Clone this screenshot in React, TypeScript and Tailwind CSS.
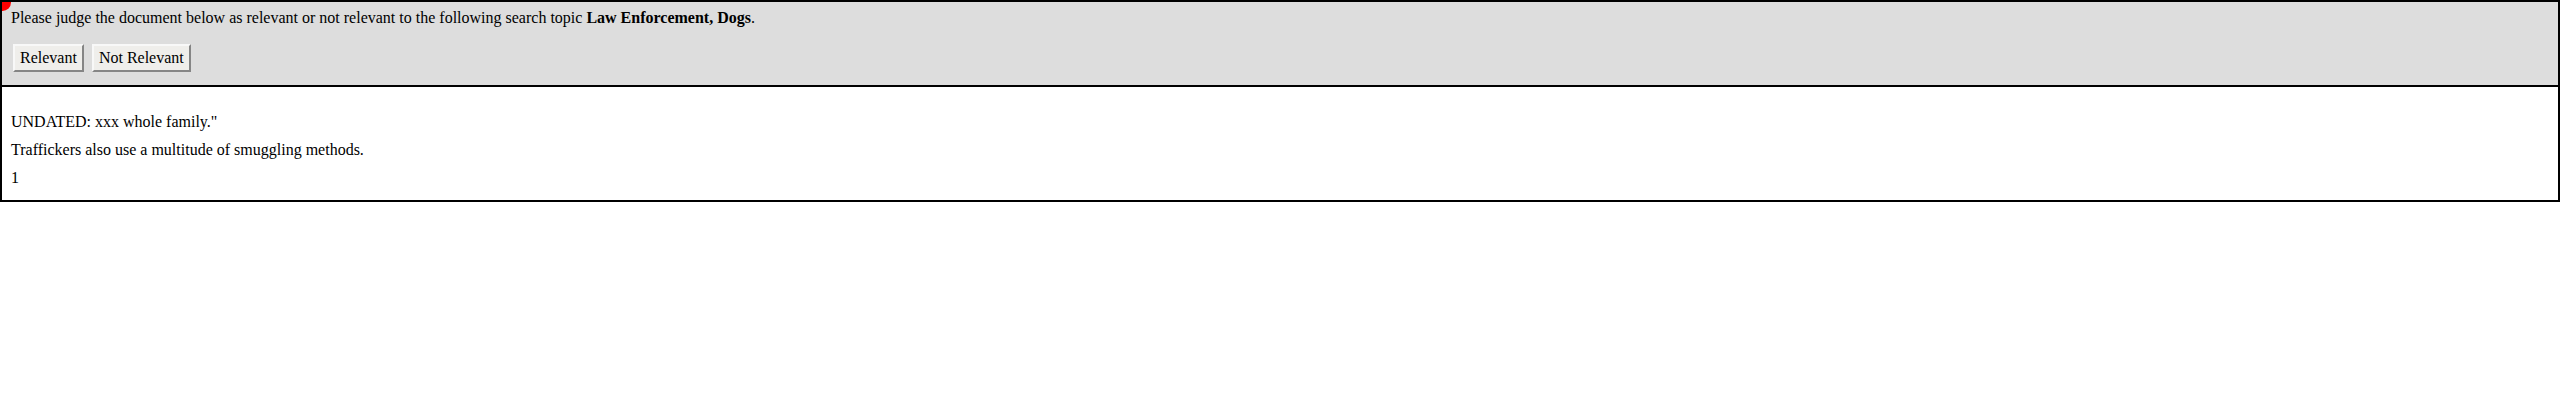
import React from "react";

export default function App() {
  return (
    <div className="relative border-2 border-black font-['Liberation_Serif','Times_New_Roman',serif] text-[16px] text-black overflow-hidden">
      <div className="absolute -left-[8px] -top-[8px] w-[17px] h-[17px] rounded-full bg-[#ff0000]" />
      <div className="bg-[#dddddd] px-[9px] pt-[7px] pb-[13px] border-b-2 border-black">
        <div className="leading-[18px]">
          Please judge the document below as relevant or not relevant to the following search topic{" "}
          <b>Law Enforcement, Dogs</b>.
        </div>
        <div className="mt-[17px] ml-[2px] flex gap-[8px]">
          <button className="h-[28px] px-[5px] leading-[18px] bg-[#efeeeb] border-2 border-t-[#f8f8f8] border-l-[#f8f8f8] border-b-[#858585] border-r-[#858585]">
            Relevant
          </button>
          <button className="h-[28px] px-[5px] leading-[18px] bg-[#efeeeb] border-2 border-t-[#f8f8f8] border-l-[#f8f8f8] border-b-[#858585] border-r-[#858585]">
            Not Relevant
          </button>
        </div>
      </div>
      <div className="bg-white px-[9px] pt-[26px] pb-[13px] flex flex-col gap-[10px] leading-[18px]">
        <p>UNDATED: xxx whole family."</p>
        <p>Traffickers also use a multitude of smuggling methods.</p>
        <p>1</p>
      </div>
    </div>
  );
}
